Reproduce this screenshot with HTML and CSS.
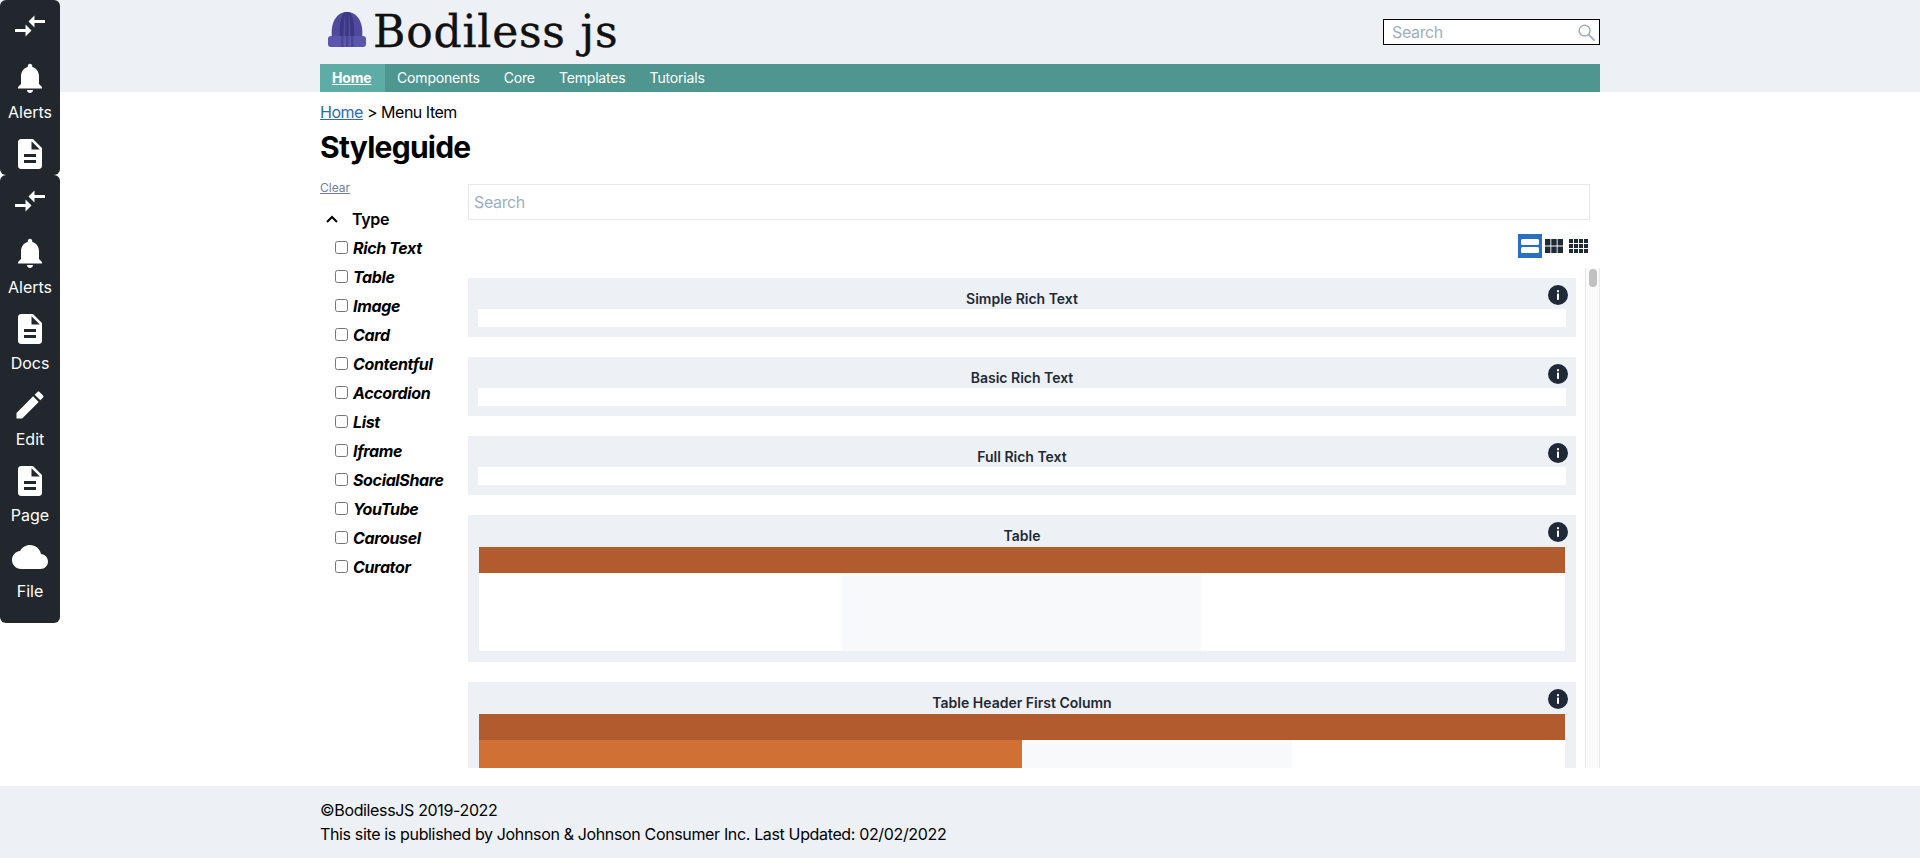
FILE: index.html
```html
<!DOCTYPE html>
<html lang="en">
<head>
    <meta charset="UTF-8">
    <meta name="viewport" content="width=device-width, initial-scale=1.0">
    <title>Bodiless js</title>
    <link rel="stylesheet" href="styles.css">
</head>
<body>
    <svg class="icon-defs" aria-hidden="true">
        <symbol id="i-compare" viewBox="0 0 24 24"><path d="M9.01 14H2v2h7.01v3L13 15l-3.99-4v3zm5.98-1v-3H22V8h-7.01V5L11 9l3.99 4z"/></symbol>
        <symbol id="i-bell" viewBox="0 0 24 24"><path d="M12 22c1.1 0 2-.9 2-2h-4c0 1.1.89 2 2 2zm6-6v-5c0-3.07-1.64-5.64-4.5-6.32V4c0-.83-.67-1.5-1.5-1.5s-1.5.67-1.5 1.5v.68C7.63 5.36 6 7.92 6 11v5l-2 2v1h16v-1l-2-2z"/></symbol>
        <symbol id="i-doc" viewBox="0 0 24 24"><path d="M14 2H6c-1.1 0-1.99.9-1.99 2L4 20c0 1.1.89 2 1.99 2H18c1.1 0 2-.9 2-2V8l-6-6zm2 16H8v-2h8v2zm0-4H8v-2h8v2zm-3-5V3.5L18.5 9H13z"/></symbol>
        <symbol id="i-edit" viewBox="0 0 24 24"><path d="M3 17.25V21h3.75L17.81 9.94l-3.75-3.75L3 17.25zM20.71 7.04c.39-.39.39-1.02 0-1.41l-2.34-2.34c-.39-.39-1.02-.39-1.41 0l-1.83 1.83 3.75 3.75 1.83-1.83z"/></symbol>
        <symbol id="i-cloud" viewBox="0 0 24 24"><path d="M19.35 10.04C18.67 6.59 15.64 4 12 4 9.11 4 6.6 5.64 5.35 8.04 2.34 8.36 0 10.91 0 14c0 3.31 2.69 6 6 6h13c2.76 0 5-2.24 5-5 0-2.64-2.05-4.78-4.65-4.96z"/></symbol>
        <symbol id="i-info" viewBox="0 0 20 20"><circle cx="10" cy="10" r="10" fill="#1f2937"/><rect x="9" y="8.6" width="2" height="6.2" fill="#fff"/><rect x="9" y="5.2" width="2" height="2" fill="#fff"/></symbol>
    </svg>

    <div class="admin-bar admin-bar-top">
        <div class="admin-item admin-toggle"><svg class="admin-icon"><use href="#i-compare"/></svg></div>
        <div class="admin-item"><svg class="admin-icon"><use href="#i-bell"/></svg><span class="admin-label">Alerts</span></div>
        <div class="admin-item"><svg class="admin-icon"><use href="#i-doc"/></svg></div>
    </div>
    <div class="admin-bar admin-bar-main">
        <div class="admin-item admin-toggle"><svg class="admin-icon"><use href="#i-compare"/></svg></div>
        <div class="admin-item"><svg class="admin-icon"><use href="#i-bell"/></svg><span class="admin-label">Alerts</span></div>
        <div class="admin-item"><svg class="admin-icon"><use href="#i-doc"/></svg><span class="admin-label">Docs</span></div>
        <div class="admin-item"><svg class="admin-icon"><use href="#i-edit"/></svg><span class="admin-label">Edit</span></div>
        <div class="admin-item"><svg class="admin-icon"><use href="#i-doc"/></svg><span class="admin-label">Page</span></div>
        <div class="admin-item"><svg class="admin-icon"><use href="#i-cloud"/></svg><span class="admin-label">File</span></div>
    </div>

    <header class="site-header">
        <div class="wrap">
            <div class="brand-row">
                <a class="logo" href="#">
                    <svg class="logo-hat" viewBox="0 0 38 35">
                        <path d="M4 26C2 10 9 0 19 0s17 10 15 26z" fill="#4f4a9e"/>
                        <path d="M12 26C11 13 13 4 16 .5l1.500-.3C16 6 15.500 14 15.500 26zM17.500 26V0h3v26zM22.500 26C22.500 14 22 6 20.500 .2l1.500.3c3 3.500 5 12.500 4 25.500z" fill="#3b3780"/>
                        <path d="M3 24h32c2 0 3 1 3 3v5c0 2-1 3-3 3H3c-2 0-3-1-3-3v-5c0-2 1-3 3-3z" fill="#5b56ab"/>
                        <path d="M13 24h2.500v11H13zM18 24h2.500v11H18zM23 24h2.500v11H23z" fill="#4a4695"/>
                    </svg>
                    <span class="logo-text">Bodiless js</span>
                </a>
                <div class="site-search">
                    <input class="site-search-input" type="text" placeholder="Search">
                    <svg class="site-search-icon" viewBox="0 0 18 18"><circle cx="7" cy="7" r="5.800" fill="none" stroke="#a0aec0" stroke-width="1.600"/><path d="M11.300 11.300L17 17" stroke="#a0aec0" stroke-width="2" stroke-linecap="round"/></svg>
                </div>
            </div>
            <nav class="main-nav">
                <a class="nav-link nav-active" href="#">Home</a>
                <a class="nav-link" href="#">Components</a>
                <a class="nav-link" href="#">Core</a>
                <a class="nav-link" href="#">Templates</a>
                <a class="nav-link" href="#">Tutorials</a>
            </nav>
        </div>
    </header>

    <main class="wrap page-main">
        <div class="breadcrumb"><a href="#">Home</a> &gt; Menu Item</div>
        <h1 class="page-title">Styleguide</h1>
        <div class="guide">
            <aside class="filters">
                <a class="clear-link" href="#">Clear</a>
                <div class="filter-head">
                    <svg class="filter-chevron" viewBox="0 0 12 8"><path d="M1 7l5-5 5 5" fill="none" stroke="#000" stroke-width="2"/></svg>
                    <span>Type</span>
                </div>
                <label class="filter-item"><input type="checkbox"><span class="filter-name">Rich Text</span></label>
                <label class="filter-item"><input type="checkbox"><span class="filter-name">Table</span></label>
                <label class="filter-item"><input type="checkbox"><span class="filter-name">Image</span></label>
                <label class="filter-item"><input type="checkbox"><span class="filter-name">Card</span></label>
                <label class="filter-item"><input type="checkbox"><span class="filter-name">Contentful</span></label>
                <label class="filter-item"><input type="checkbox"><span class="filter-name">Accordion</span></label>
                <label class="filter-item"><input type="checkbox"><span class="filter-name">List</span></label>
                <label class="filter-item"><input type="checkbox"><span class="filter-name">Iframe</span></label>
                <label class="filter-item"><input type="checkbox"><span class="filter-name">SocialShare</span></label>
                <label class="filter-item"><input type="checkbox"><span class="filter-name">YouTube</span></label>
                <label class="filter-item"><input type="checkbox"><span class="filter-name">Carousel</span></label>
                <label class="filter-item"><input type="checkbox"><span class="filter-name">Curator</span></label>
            </aside>
            <section class="results">
                <input class="guide-search" type="text" placeholder="Search">
                <div class="view-switch">
                    <svg class="view-btn view-list" viewBox="0 0 24 24"><rect width="24" height="24" fill="#2b6fc2"/><rect x="3" y="5" width="18" height="6" rx="1.500" fill="#fff"/><rect x="3" y="13" width="18" height="6" rx="1.500" fill="#fff"/></svg>
                    <svg class="view-btn view-grid" viewBox="0 0 18 14"><path d="M0 0h5.400v6.400H0zM6.300 0h5.400v6.400H6.300zM12.600 0H18v6.400h-5.400zM0 7.600h5.400V14H0zM6.300 7.600h5.400V14H6.300zM12.600 7.600H18V14h-5.400z" fill="#1f2937"/></svg>
                    <svg class="view-btn view-grid view-dense" viewBox="0 0 19 14"><path d="M0 0h4v4H0zM5 0h4v4H5zM10 0h4v4h-4zM15 0h4v4h-4zM0 5h4v4H0zM5 5h4v4H5zM10 5h4v4h-4zM15 5h4v4h-4zM0 10h4v4H0zM5 10h4v4H5zM10 10h4v4h-4zM15 10h4v4h-4z" fill="#1f2937"/></svg>
                </div>
                <div class="scroll-area">
                    <div class="card-list">
                        <article class="card">
                            <svg class="card-info"><use href="#i-info"/></svg>
                            <h3 class="card-title">Simple Rich Text</h3>
                            <div class="rich-box"></div>
                        </article>
                        <article class="card">
                            <svg class="card-info"><use href="#i-info"/></svg>
                            <h3 class="card-title">Basic Rich Text</h3>
                            <div class="rich-box"></div>
                        </article>
                        <article class="card">
                            <svg class="card-info"><use href="#i-info"/></svg>
                            <h3 class="card-title">Full Rich Text</h3>
                            <div class="rich-box"></div>
                        </article>
                        <article class="card card-table">
                            <svg class="card-info"><use href="#i-info"/></svg>
                            <h3 class="card-title">Table</h3>
                            <div class="table-head"></div>
                            <div class="table-row table-row-even">
                                <div class="cell"></div>
                                <div class="cell cell-alt"></div>
                                <div class="cell"></div>
                            </div>
                        </article>
                        <article class="card card-table">
                            <svg class="card-info"><use href="#i-info"/></svg>
                            <h3 class="card-title">Table Header First Column</h3>
                            <div class="table-head"></div>
                            <div class="table-row table-row-first">
                                <div class="cell cell-head"></div>
                                <div class="cell cell-alt"></div>
                                <div class="cell"></div>
                            </div>
                        </article>
                    </div>
                    <div class="scroll-track"><div class="scroll-thumb"></div></div>
                </div>
            </section>
        </div>
    </main>

    <footer class="site-footer">
        <div class="wrap">
            <div>©BodilessJS 2019-2022</div>
            <div>This site is published by Johnson &amp; Johnson Consumer Inc. Last Updated: 02/02/2022</div>
        </div>
    </footer>
</body>
</html>
```

FILE: styles.css
```css
* {
    box-sizing: border-box;
}
html, body {
    height: 100%;
}
body {
    margin: 0;
    font-family: Inter, "Noto Sans", sans-serif;
    font-size: 16px;
    line-height: 24px;
    letter-spacing: -0.022em;
    color: #000;
    background-color: #fff;
    overflow: hidden;
}
.icon-defs {
    display: none;
}
.wrap {
    width: 1280px;
    margin: 0 auto;
}

/* admin side bars, they sit over the page */
.admin-bar {
    position: fixed;
    left: 0;
    width: 60px;
    padding: 8px 0;
    background-color: #22272e;
    border-radius: 6px;
    color: #fff;
    overflow: hidden;
}
.admin-bar-top {
    top: 0;
    height: 175px;
    padding-bottom: 0;
}
.admin-bar-main {
    top: 175px;
}
.admin-item {
    display: flex;
    flex-direction: column;
    align-items: center;
    height: 63px;
    margin-bottom: 13px;
}
.admin-toggle {
    height: 36px;
    margin-bottom: 16px;
}
.admin-icon {
    width: 36px;
    height: 36px;
    flex: none;
    fill: #fff;
}
.admin-label {
    margin-top: 4px;
    font-size: 16px;
    line-height: 24px;
    letter-spacing: 0;
}

/* header */
.site-header {
    height: 92px;
    background-color: #edf0f5;
}
.brand-row {
    display: flex;
    justify-content: space-between;
    align-items: center;
    height: 64px;
}
.logo {
    display: flex;
    align-items: center;
    margin-left: 8px;
    color: #111;
    text-decoration: none;
}
.logo-hat {
    width: 38px;
    height: 35px;
    margin-top: -6px;
}
.logo-text {
    margin-left: 7px;
    font-family: "DejaVu Serif", serif;
    font-size: 44px;
    line-height: 56px;
    letter-spacing: 0.8px;
    -webkit-text-stroke: 0.4px #111;
}
.site-search {
    position: relative;
    width: 217px;
    height: 26px;
}
.site-search-input {
    display: block;
    width: 100%;
    height: 100%;
    padding: 0 28px 0 8px;
    border: 1.500px solid #000;
    background-color: #fff;
    font-family: inherit;
    font-size: 16px;
    letter-spacing: -0.022em;
}
.site-search-input::placeholder,
.guide-search::placeholder {
    color: #a0aec0;
    opacity: 1;
}
.site-search-icon {
    position: absolute;
    top: 5px;
    right: 5px;
    width: 17px;
    height: 17px;
}
.main-nav {
    display: flex;
    height: 28px;
    background-color: #4f9691;
}
.nav-link {
    padding: 0 12px;
    font-size: 14px;
    line-height: 28px;
    letter-spacing: -0.012em;
    color: #fff;
    text-decoration: none;
}
.nav-active {
    width: 65px;
    background-color: #5dada6;
    font-weight: 700;
    text-decoration: underline;
}

/* page */
.page-main {
    padding-top: 8px;
}
.breadcrumb {
    line-height: 24px;
    letter-spacing: -0.03em;
}
.breadcrumb a {
    color: #2b6cb0;
}
.page-title {
    margin: 5px 0 15px;
    font-size: 30px;
    line-height: 36px;
    font-weight: 700;
    letter-spacing: -0.025em;
}
.guide {
    display: flex;
}
.filters {
    width: 148px;
    flex: none;
}
.clear-link {
    display: block;
    font-size: 12px;
    line-height: 16px;
    letter-spacing: 0;
    color: #718096;
}
.filter-head {
    display: flex;
    align-items: center;
    height: 24px;
    margin: 11px 0 2px;
    padding-left: 6px;
    font-weight: 600;
}
.filter-chevron {
    width: 12px;
    height: 8px;
    margin-right: 14px;
}
.filter-item {
    display: flex;
    align-items: center;
    height: 29px;
    padding-left: 15px;
    font-weight: 700;
    font-style: italic;
}
.filter-item input {
    width: 13px;
    height: 13px;
    margin: 0 5px 0 0;
}
.filter-name {
    line-height: 24px;
}
.results {
    flex: 1;
    min-width: 0;
}
.guide-search {
    display: block;
    width: 1122px;
    height: 36px;
    margin-top: 4px;
    padding: 0 5px;
    border: 1.500px solid #e6e8ec;
    font-family: inherit;
    font-size: 16px;
    letter-spacing: -0.022em;
}
.view-switch {
    display: flex;
    align-items: center;
    justify-content: flex-end;
    height: 24px;
    margin: 14px 12px 10px 0;
}
.view-btn {
    display: block;
}
.view-list {
    width: 24px;
    height: 24px;
}
.view-grid {
    width: 18px;
    height: 14px;
    margin-left: 3px;
}
.view-dense {
    width: 19px;
    margin-left: 6px;
}
.scroll-area {
    display: flex;
    height: 500px;
}
.card-list {
    width: 1108px;
    padding-top: 10px;
    overflow: hidden;
}
.scroll-track {
    width: 15px;
    margin-left: 9px;
    padding: 1px 3px;
    background-color: #fafafa;
    border-left: 1px solid #e8e8e8;
    border-right: 1px solid #e8e8e8;
}
.scroll-thumb {
    width: 8px;
    height: 18px;
    border-radius: 4px;
    background-color: #c1c1c1;
}

/* cards */
.card {
    position: relative;
    height: 59px;
    margin-bottom: 20px;
    padding: 0 10px;
    background-color: #edf0f5;
}
.card-info {
    position: absolute;
    top: 7px;
    right: 8px;
    width: 20px;
    height: 20px;
}
.card-title {
    margin: 0;
    height: 31px;
    padding-top: 11px;
    font-size: 14px;
    line-height: 20px;
    font-weight: 600;
    letter-spacing: 0;
    color: #1f2937;
    text-align: center;
}
.rich-box {
    height: 18px;
    background-color: #fff;
}
.card-table {
    height: auto;
    padding: 0 11px 11px;
}
.card-table .card-title {
    height: 32px;
}
.table-head {
    height: 26px;
    background-color: #b25b2e;
}
.table-row {
    display: grid;
    height: 78px;
}
.table-row-even {
    grid-template-columns: 363px 359px 364px;
}
.table-row-first {
    grid-template-columns: 543px 270px 273px;
}
.cell {
    background-color: #fff;
}
.cell-alt {
    background-color: #f8f9fb;
}
.cell-head {
    background-color: #d07035;
}

/* footer */
.site-footer {
    position: fixed;
    left: 0;
    right: 0;
    bottom: 0;
    height: 72px;
    padding-top: 12px;
    background-color: #edf0f5;
}
```
